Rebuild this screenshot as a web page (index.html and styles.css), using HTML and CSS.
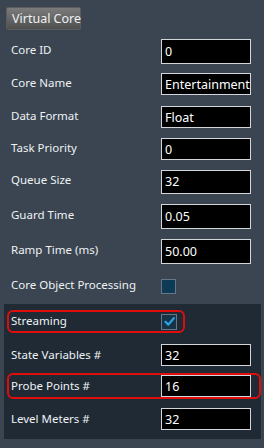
FILE: index.html
```html
<!DOCTYPE html>
<html lang="en">
<head>
    <meta charset="UTF-8">
    <meta name="viewport" content="width=device-width, initial-scale=1.0">
    <title>Virtual Core</title>
    <link rel="stylesheet" href="styles.css">
</head>
<body>
    <div class="panel">
        <div class="tab-btn">Virtual Core</div>

        <div class="rows">
            <div class="row r1">
                <label>Core ID</label>
                <input type="text" class="field tall" value="0">
            </div>
            <div class="row r2">
                <label>Core Name</label>
                <input type="text" class="field" value="Entertainment Task">
            </div>
            <div class="row r3">
                <label>Data Format</label>
                <input type="text" class="field" value="Float">
            </div>
            <div class="row r3">
                <label>Task Priority</label>
                <input type="text" class="field" value="0">
            </div>
            <div class="row r5">
                <label>Queue Size</label>
                <input type="text" class="field mid" value="32">
            </div>
            <div class="row r6">
                <label>Guard Time</label>
                <input type="text" class="field tall" value="0.05">
            </div>
            <div class="row r7">
                <label>Ramp Time (ms)</label>
                <input type="text" class="field tall" value="50.00">
            </div>
            <div class="row r7">
                <label>Core Object Processing</label>
                <span class="check"></span>
            </div>
        </div>

        <div class="advanced">
            <div class="row streaming marked">
                <label>Streaming</label>
                <span class="check checked">
                    <svg width="13" height="13" viewBox="0 0 13 13">
                        <path d="M2.5 6.8 L5.3 9.6 L10.8 3.2" fill="none" stroke="#2ba3e6" stroke-width="2.2" stroke-linecap="round" stroke-linejoin="round"/>
                    </svg>
                </span>
            </div>
            <div class="row state">
                <label>State Variables #</label>
                <input type="text" class="field" value="32">
            </div>
            <div class="row probe marked">
                <label>Probe Points #</label>
                <input type="text" class="field" value="16">
            </div>
            <div class="row level">
                <label>Level Meters #</label>
                <input type="text" class="field" value="32">
            </div>
        </div>
    </div>
</body>
</html>
```

FILE: styles.css
```css
* {
    margin: 0;
    padding: 0;
    box-sizing: border-box;
    font-family: 'Noto Sans', 'Open Sans', sans-serif;
}

body {
    background: #3a4551;
    width: 264px;
    height: 448px;
    overflow: hidden;
}

.panel {
    padding-top: 7px;
}

.tab-btn {
    display: block;
    margin-left: 6px;
    width: 75px;
    height: 23px;
    line-height: 21px;
    padding-left: 5px;
    font-size: 12.5px;
    color: #eef2f4;
    background: linear-gradient(#7b7b7b, #4f4f4f);
    border: 1px solid #5c5c5c;
    border-radius: 2px;
    white-space: nowrap;
}

.rows {
    padding-top: 5px;
}

.row {
    display: flex;
    align-items: center;
    padding-left: 11px;
}

.row label {
    width: 150px;
    flex-shrink: 0;
    font-size: 11.5px;
    color: #eef2f4;
    margin-bottom: 4px;
    white-space: nowrap;
}

.r1 { height: 32px; }
.r2 { height: 34px; }
.r3 { height: 32px; }
.r5 { height: 33px; }
.r6 { height: 36px; }
.r7 { height: 35px; }

.field {
    width: 90px;
    height: 22px;
    background: #000;
    border: 1px solid #d2d6da;
    color: #fff;
    font-size: 12.5px;
    padding-left: 3px;
    outline: none;
}

.field.tall {
    height: 25px;
}

.field.mid {
    height: 24px;
}

.check {
    display: flex;
    align-items: center;
    justify-content: center;
    width: 15px;
    height: 15px;
    background: #0d3a55;
    border: 1px solid #66778a;
}

.check.checked {
    width: 16px;
    height: 16px;
    background: #173447;
}

.advanced {
    margin-left: 4px;
    width: 257px;
    background: #1f2a35;
    padding: 6px 0 0 3px;
}

.advanced .row {
    padding-left: 4px;
}

.advanced .row.marked {
    border: 2px solid #e00d0d;
    border-radius: 6px;
    padding-left: 2px;
}

.advanced .row label {
    margin-bottom: 2px;
}

.streaming {
    width: 178px;
    height: 23px;
    margin-bottom: 5px;
}

.streaming label {
    margin-bottom: 0;
}

.state {
    height: 34px;
    margin-bottom: 1px;
}

.probe {
    width: 254px;
    height: 26px;
}

.level {
    height: 40px;
}
```
